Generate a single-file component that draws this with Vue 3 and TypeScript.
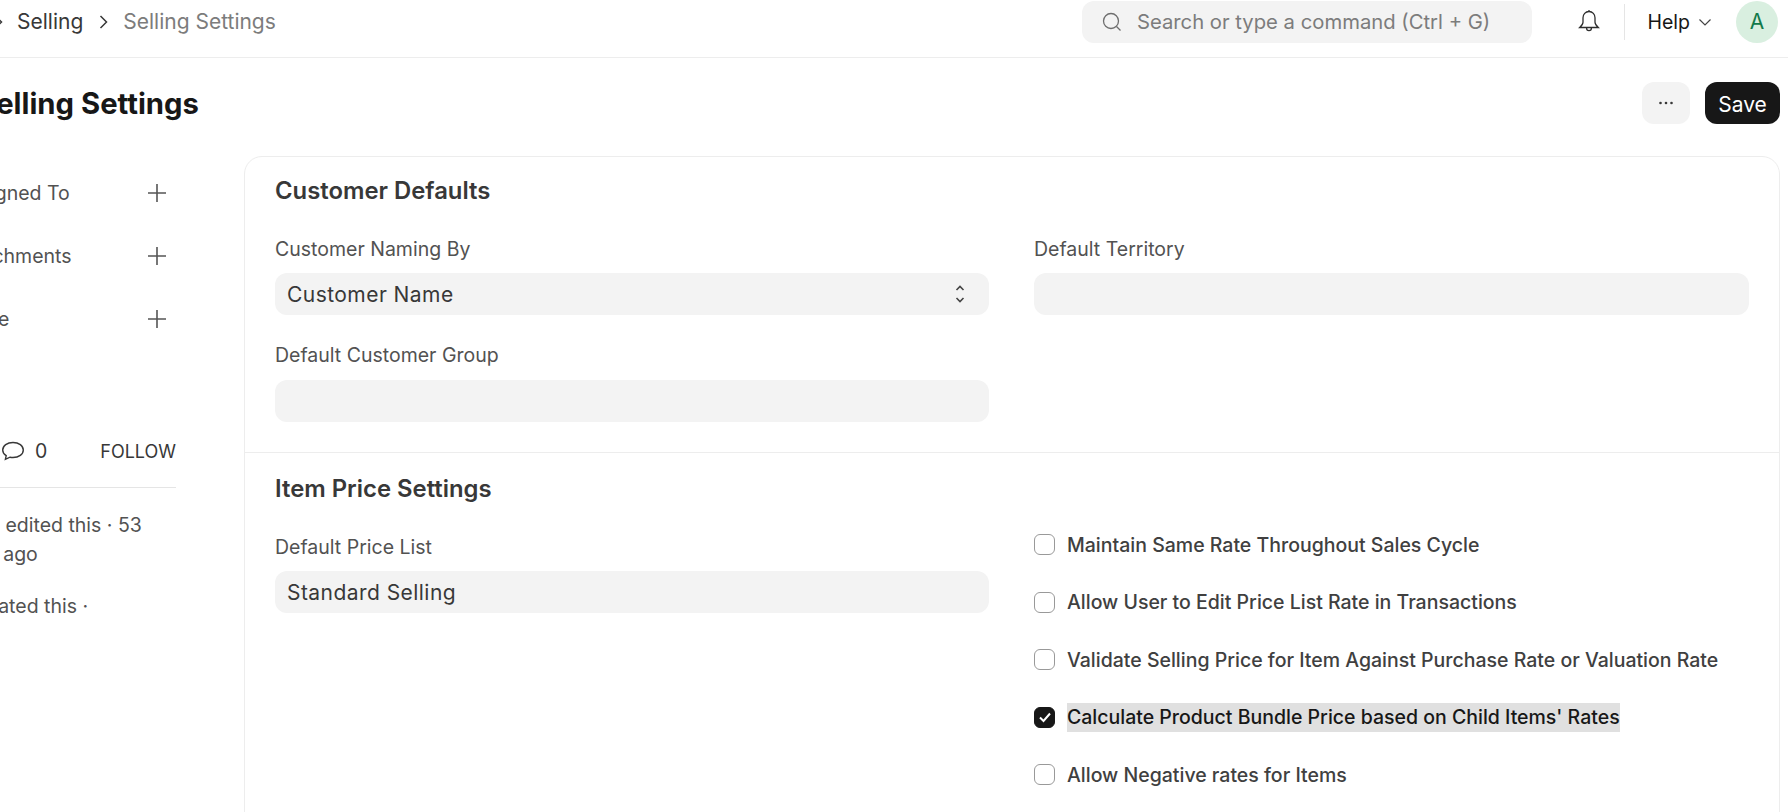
<script setup lang="ts">
const sideRows: string[] = ['Assigned To', 'Attachments', 'Share']
const checks: { label: string; on: boolean }[] = [
  { label: 'Maintain Same Rate Throughout Sales Cycle', on: false },
  { label: 'Allow User to Edit Price List Rate in Transactions', on: false },
  { label: 'Validate Selling Price for Item Against Purchase Rate or Valuation Rate', on: false },
  { label: "Calculate Product Bundle Price based on Child Items' Rates", on: true },
  { label: 'Allow Negative rates for Items', on: false },
]
</script>

<template>
  <div class="page">
    <header class="nav">
      <div class="crumbs">
        <svg class="chev first" width="12" height="14" viewBox="0 0 12 14"><path d="M2.500 1l6 6-6 6" /></svg>
        <span class="crumb">Selling</span>
        <svg class="chev" width="12" height="14" viewBox="0 0 12 14"><path d="M2.500 1l6 6-6 6" /></svg>
        <span class="crumb muted">Selling Settings</span>
      </div>
      <div class="search">
        <svg width="20" height="20" viewBox="0 0 20 20" class="s-ico"><circle cx="9" cy="9" r="7.500" /><path d="M14.500 14.500l4 4" /></svg>
        <span>Search or type a command (Ctrl + G)</span>
      </div>
      <svg class="bell" width="24" height="26" viewBox="0 0 24 26"><path d="M12 2.500c-3.600 0-6 2.800-6 6.300v4.400c0 2-1.500 3.600-3.300 5.300h18.600c-1.800-1.700-3.300-3.300-3.300-5.300V8.800c0-3.500-2.400-6.300-6-6.300zM9.500 18.800c0 1.800 1.100 2.900 2.500 2.900s2.500-1.100 2.500-2.900M12 1v1.500" /></svg>
      <div class="vline"></div>
      <span class="help">Help</span>
      <svg class="help-chev" width="14" height="10" viewBox="0 0 14 10"><path d="M1.500 2.500L7 8l5.500-5.500" /></svg>
      <div class="avatar">A</div>
    </header>

    <div class="head">
      <h1>Selling Settings</h1>
      <button class="btn more"><svg width="16" height="4" viewBox="0 0 16 4"><circle cx="2.500" cy="2" r="1.300" /><circle cx="8" cy="2" r="1.300" /><circle cx="13.500" cy="2" r="1.300" /></svg></button>
      <button class="btn save">Save</button>
    </div>

    <div class="body">
      <aside class="side">
        <div v-for="r in sideRows" :key="r" class="side-row">
          <span>{{ r }}</span>
          <svg width="20" height="20" viewBox="0 0 20 20"><path d="M10 1v18M1 10h18" /></svg>
        </div>
        <div class="follow">
          <svg width="24" height="22" viewBox="0 0 24 22"><path d="M12 2.500c-5.800 0-10.300 3.300-10.300 7.500 0 2.300 1.300 4.300 3.500 5.700l-.8 3.600 4.600-2.100c1 .2 2 .3 3 .3 5.800 0 10.300-3.300 10.300-7.500S17.800 2.500 12 2.500z" /></svg>
          <span class="count">0</span>
          <span class="follow-txt">FOLLOW</span>
        </div>
        <div class="activity line-a">You edited this · 53</div>
        <div class="activity line-b">minutes ago</div>
        <div class="activity line-c">You created this ·</div>
      </aside>

      <main class="card">
        <section class="sec sec-one">
          <h2>Customer Defaults</h2>
          <div class="grid">
            <div class="col">
              <label>Customer Naming By</label>
              <div class="input select">
                <span>Customer Name</span>
                <svg width="14" height="22" viewBox="0 0 14 22"><path d="M3.500 7L7 3.500 10.500 7M3.500 15L7 18.500 10.500 15" /></svg>
              </div>
              <label class="second">Default Customer Group</label>
              <div class="input"></div>
            </div>
            <div class="col">
              <label>Default Territory</label>
              <div class="input"></div>
            </div>
          </div>
        </section>
        <section class="sec sec-two">
          <h2>Item Price Settings</h2>
          <div class="grid">
            <div class="col">
              <label>Default Price List</label>
              <div class="input"><span>Standard Selling</span></div>
            </div>
            <div class="col checks">
              <div v-for="c in checks" :key="c.label" class="check">
                <span class="box" :class="{ on: c.on }">
                  <svg v-if="c.on" width="14" height="12" viewBox="0 0 14 12"><path d="M2 6.500l3.500 3.500L12 2.500" /></svg>
                </span>
                <span class="check-label" :class="{ sel: c.on }">{{ c.label }}</span>
              </div>
            </div>
          </div>
        </section>
      </main>
    </div>
  </div>
</template>

<style>
html, body { margin: 0; padding: 0; background: #fff; overflow: hidden; }
</style>

<style scoped>
.page { width: 1788px; height: 812px; overflow: hidden; font-family: Inter, "Liberation Sans", sans-serif; color: #383838; background: #fff; }
.nav { height: 58px; box-sizing: border-box; border-bottom: 1px solid #ededed; display: flex; align-items: center; padding: 0 10px 14px 0; }
.crumbs { display: flex; align-items: center; flex: 1; margin-left: -7px; font-size: 21px; }
.crumbs .chev { fill: none; stroke: #383838; stroke-width: 1.500; }
.chev.first { margin-right: 12px; }
.crumbs > .chev:not(.first) { margin: 0 13px 0 15px; }
.crumb { color: #383838; }
.crumb.muted { color: #7c7c7c; }
.search { width: 450px; height: 42px; background: #f3f3f3; border-radius: 12px; display: flex; align-items: center; box-sizing: border-box; padding-left: 20px; font-size: 20.250px; color: #7c7c7c; }
.s-ico { fill: none; stroke: #6e6e6e; stroke-width: 1.300; margin-right: 15px; }
.bell { fill: none; stroke: #2e2e2e; stroke-width: 1.300; margin-left: 45.500px; }
.vline { width: 1px; height: 36px; background: #e5e5e5; margin-left: 23px; }
.help { font-size: 19.500px; color: #171717; margin-left: 22px; }
.help-chev { fill: none; stroke: #444; stroke-width: 1.200; margin-left: 8px; }
.avatar { width: 42px; height: 42px; border-radius: 50%; background: #d9efe0; color: #137a4b; display: flex; align-items: center; justify-content: center; font-size: 21px; margin-left: 24px; }

.head { height: 98px; box-sizing: border-box; display: flex; align-items: center; padding: 0 8px 8px 0; }
h1 { flex: 1; margin: 0 0 0 -23px; font-size: 29.250px; font-weight: 700; color: #171717; }
.btn { border: 0; height: 42px; border-radius: 12px; font-family: inherit; display: flex; align-items: center; justify-content: center; }
.more { width: 48px; background: #f3f3f3; margin-right: 15px; fill: #383838; }
.save { width: 75px; background: #171717; color: #fff; font-size: 21px; padding: 2px 0 0; }

.body { display: flex; align-items: flex-start; }
.side { width: 176px; flex: none; padding-top: 5px; margin-right: 68px; font-size: 19.500px; color: #525252; }
.side-row { height: 63px; display: flex; align-items: center; }
.side-row span { flex: 1; margin-left: -44px; white-space: nowrap; }
.side-row svg { fill: none; stroke: #555; stroke-width: 1.600; margin-right: 9px; }
.follow { margin-top: 83px; height: 36px; display: flex; align-items: center; border-bottom: 1px solid #e5e5e5; padding-bottom: 18px; color: #383838; }
.follow svg { fill: none; stroke: #383838; stroke-width: 1.400; margin-left: 1px; }
.count { margin-left: 10px; flex: 1; }
.follow-txt { font-size: 18px; }
.activity { line-height: 29px; white-space: nowrap; }
.line-a { margin: 23px 0 0 -35px; }
.line-b { margin-left: -75px; }
.line-c { margin: 23px 0 0 -72px; }

.card { flex: 1; height: 800px; margin-right: 8px; box-sizing: border-box; border: 1px solid #ededed; border-radius: 18px; }
.sec { padding: 17px 30px 0 30px; }
.sec-one { height: 296px; box-sizing: border-box; border-bottom: 1px solid #ededed; }
.sec-two { padding-top: 19px; }
h2 { margin: 0; font-size: 23.850px; font-weight: 600; color: #383838; height: 34px; line-height: 34px; }
.grid { display: grid; grid-template-columns: 714px 715px; column-gap: 45px; margin-top: 29px; }
label { display: block; font-size: 19.500px; color: #525252; height: 24px; line-height: 24px; margin-bottom: 12px; }
.second { margin-top: 28px; margin-bottom: 13px; }
.input { height: 42px; background: #f3f3f3; border-radius: 12px; display: flex; align-items: center; justify-content: space-between; padding: 0 12px; box-sizing: border-box; font-size: 21px; letter-spacing: .45px; color: #383838; }
.select svg { fill: none; stroke: #444; stroke-width: 1.600; margin-right: 10px; }
.checks { margin-top: -19px; }
.check { height: 57.500px; display: flex; align-items: center; font-size: 19.500px; font-weight: 500; color: #404040; }
.box { width: 21px; height: 21px; box-sizing: border-box; border: 1px solid #999; border-radius: 6px; margin-right: 12px; display: flex; align-items: center; justify-content: center; flex: none; }
.box.on { background: #171717; border-color: #171717; }
.box svg { fill: none; stroke: #fff; stroke-width: 2; }
.check-label.sel { background: #e0e0e0; color: #171717; line-height: 29px; }
</style>
